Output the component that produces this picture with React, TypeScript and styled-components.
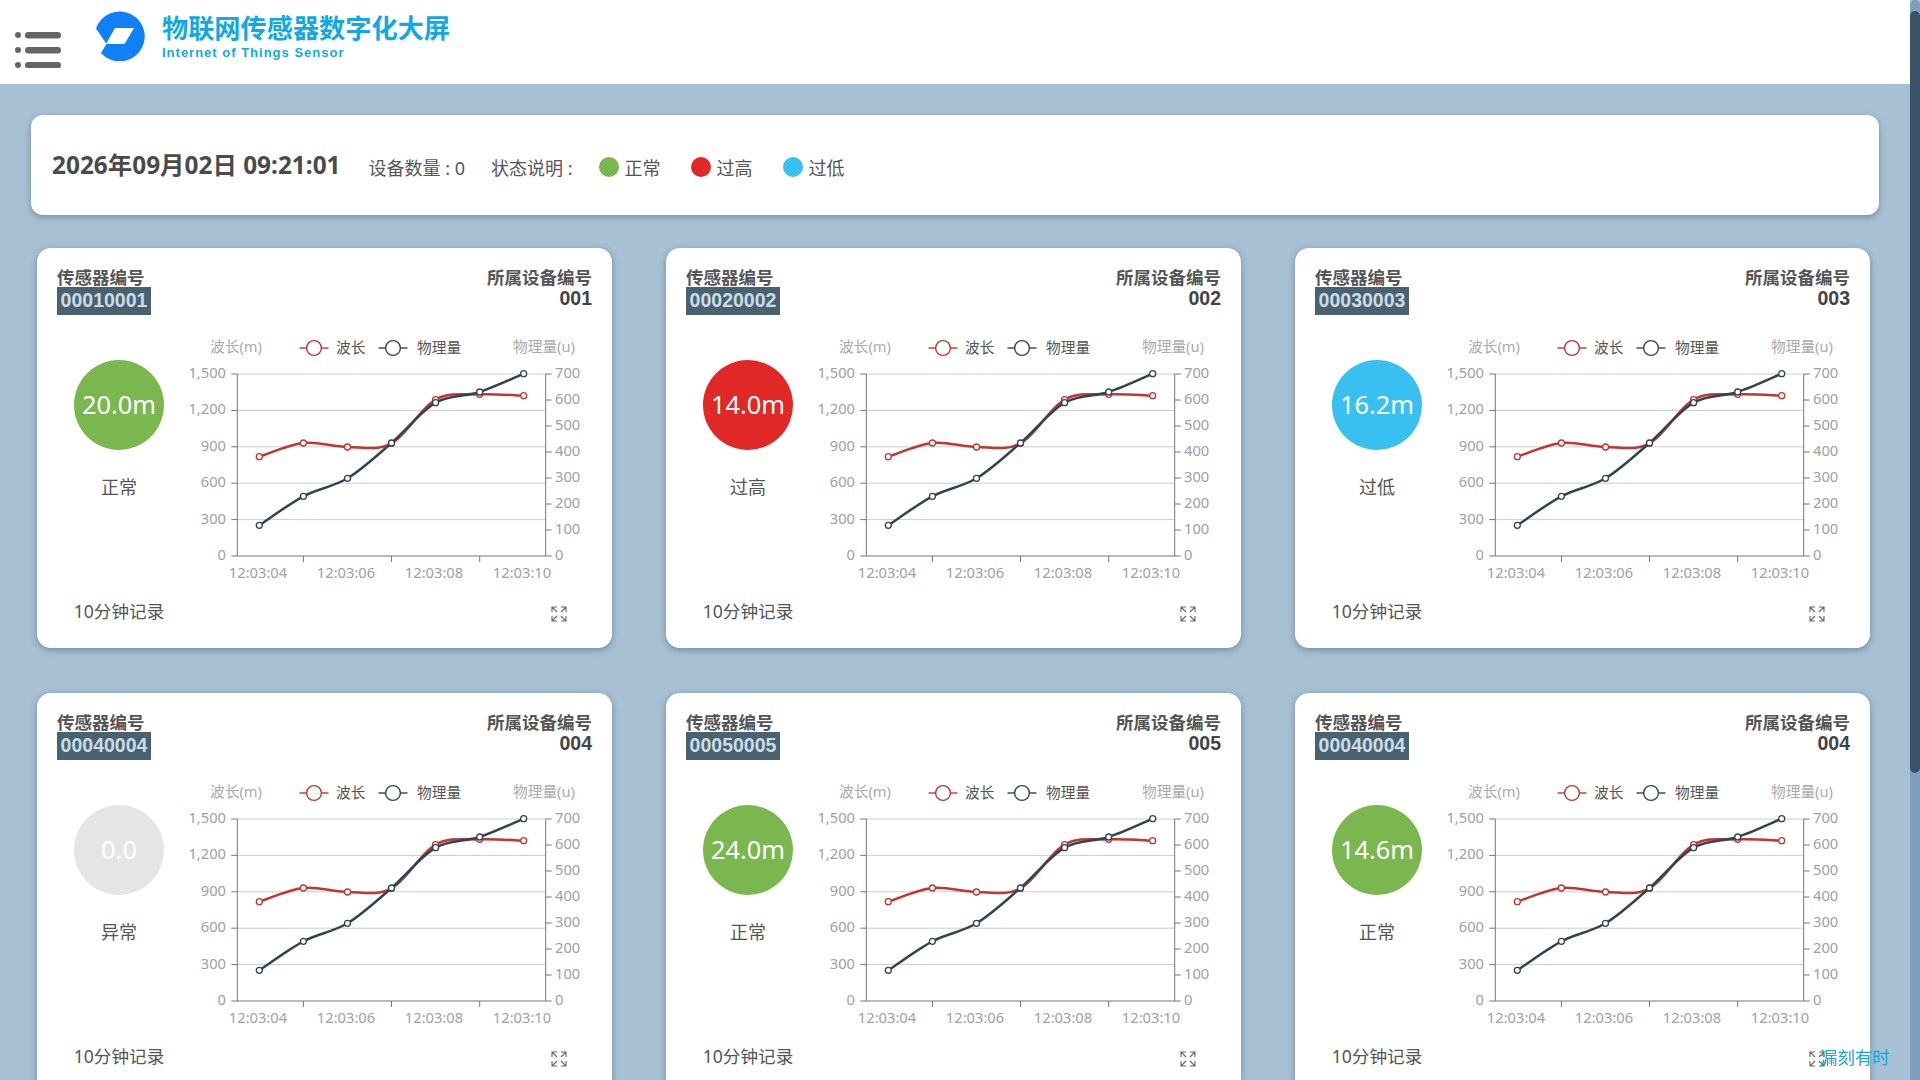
import React from 'react';
import styled, { createGlobalStyle } from 'styled-components';

const GlobalStyle = createGlobalStyle`
html, body {
  margin: 0;
  padding: 0;
  height: 100%;
  overflow: hidden;
}
body {
  font-family: 'Noto Sans', 'Noto Sans CJK SC', sans-serif;
  color: #555;
  background: #a7c0d3;
}
`;

const Shell = styled.div`
display: flex;
height: 100vh;
overflow: hidden;
`;

const Page = styled.div`
flex: 1;
min-width: 0;
background: #a7c0d3;
`;

const Rail = styled.div`
width: 10px;
flex: none;
background: #7d9fbb;
padding-top: 11px;
box-sizing: border-box;
border-radius: 5px 5px 0 0;
`;

const RailThumb = styled.div`
height: 762px;
background: #3a5368;
border-radius: 5px;
`;

const TopBar = styled.header`
height: 84px;
background: #fff;
display: flex;
align-items: flex-start;
padding-left: 15px;
`;

const MenuIcon = styled.svg`
width: 46px;
height: 36px;
margin-top: 32px;
flex: none;
`;

const Logo = styled.svg`
width: 50px;
height: 50px;
margin: 11px 0 0 35px;
flex: none;
`;

const Brand = styled.div`
margin: 12px 0 0 16px;
`;

const BrandTitle = styled.div`
font-size: 26.2px;
line-height: 32px;
font-weight: 700;
color: #12a8e8;
`;

const BrandSub = styled.div`
font-family: 'Liberation Sans', sans-serif;
font-size: 13px;
line-height: 17px;
font-weight: 700;
letter-spacing: 1px;
color: #12a8e8;
`;

const Main = styled.main`
padding: 31px 31px 0 31px;
`;

const StatusBar = styled.section`
height: 100px;
background: #fff;
border-radius: 12px;
box-shadow: 0 2px 6px rgba(40, 60, 80, 0.4);
display: flex;
align-items: center;
padding: 0 0 0 21px;
`;

const DateText = styled.div`
font-size: 24.4px;
font-weight: 700;
color: #4a4a4a;
margin-right: 28px;
position: relative;
top: -2px;
`;

const StatusText = styled.span`
font-size: 18px;
color: #555;
margin-right: 26px;
position: relative;
top: 2px;
`;

const LegendItem = styled.span`
display: flex;
align-items: center;
gap: 6px;
font-size: 18px;
color: #555;
margin-right: 30px;
position: relative;
top: 2px;
`;

const Dot = styled.i<{ $color: string }>`
display: block;
width: 20px;
height: 20px;
border-radius: 50%;
background: ${(p) => p.$color};
`;

const CardGrid = styled.div`
display: grid;
grid-template-columns: repeat(3, 575px);
column-gap: 54px;
row-gap: 45px;
margin: 33px 0 0 6px;
`;

const Card = styled.article`
height: 400px;
box-sizing: border-box;
background: #fff;
border-radius: 14px;
box-shadow: 0 2px 7px rgba(40, 60, 80, 0.4);
padding: 19px 20px 0 20px;
display: flex;
flex-direction: column;
`;

const CardHead = styled.div`
display: flex;
justify-content: space-between;
align-items: flex-start;
height: 48px;
`;

const HeadLabel = styled.div`
font-size: 17.5px;
line-height: 20px;
font-weight: 700;
color: #555;
`;

const SensorCode = styled.div`
width: 94px;
height: 28px;
background: #4a6270;
color: #c9dde7;
font-family: 'Liberation Sans', sans-serif;
font-size: 19.5px;
line-height: 26px;
font-weight: 700;
text-align: center;
`;

const DeviceBlock = styled.div`
text-align: right;
`;

const DeviceCode = styled.div`
font-family: 'Liberation Sans', sans-serif;
font-size: 19.5px;
line-height: 22px;
font-weight: 700;
color: #444;
`;

const CardBody = styled.div`
display: flex;
height: 275px;
`;

const GaugeCol = styled.div`
width: 124px;
flex: none;
display: flex;
flex-direction: column;
align-items: center;
padding-top: 45px;
`;

const Gauge = styled.div<{ $color: string }>`
width: 90px;
height: 90px;
border-radius: 50%;
background: ${(p) => p.$color};
color: #fff;
font-size: 25.4px;
display: flex;
align-items: center;
justify-content: center;
padding-bottom: 2px;
box-sizing: border-box;
`;

const GaugeState = styled.div`
margin-top: 24px;
font-size: 18px;
line-height: 26px;
color: #555;
`;

const Chart = styled.svg`
width: 411px;
height: 255px;
margin-top: 20px;
flex: none;
font-family: 'Noto Sans', 'Noto Sans CJK SC', sans-serif;
font-size: 14.7px;
`;

const CardFoot = styled.div`
display: flex;
justify-content: space-between;
align-items: center;
height: 22px;
margin-top: 10px;
padding-right: 25px;
`;

const FootLabel = styled.div`
width: 124px;
text-align: center;
font-size: 17.6px;
color: #555;
position: relative;
top: -1px;
`;

const ExpandIcon = styled.svg`
width: 16px;
height: 16px;
margin-top: 6px;
`;

const Watermark = styled.div`
position: fixed;
left: 1820px;
top: 1045px;
font-size: 17.5px;
line-height: 24px;
color: #1aa7e0;
`;

type Sensor = {
  code: string;
  device: string;
  value: string;
  state: string;
  color: string;
};

const GREEN = '#7ab74f';
const RED = '#e02826';
const BLUE = '#38c0f0';
const GREY = '#e5e5e5';

const sensors: Sensor[] = [
  { code: '00010001', device: '001', value: '20.0m', state: '正常', color: GREEN },
  { code: '00020002', device: '002', value: '14.0m', state: '过高', color: RED },
  { code: '00030003', device: '003', value: '16.2m', state: '过低', color: BLUE },
  { code: '00040004', device: '004', value: '0.0', state: '异常', color: GREY },
  { code: '00050005', device: '005', value: '24.0m', state: '正常', color: GREEN },
  { code: '00040004', device: '004', value: '14.6m', state: '正常', color: GREEN },
];

const plot = { left: 56.3, right: 364.7, top: 39, bottom: 221 };
const xs = [78.3, 122.4, 166.5, 210.5, 254.6, 298.7, 342.7];
const waveY = [121.7, 108, 112, 108.3, 64.7, 59.3, 60.7];
const physY = [190.3, 161.3, 143.3, 108, 67.7, 57, 38.7];
const leftLabels = ['1,500', '1,200', '900', '600', '300', '0'];
const rightLabels = ['700', '600', '500', '400', '300', '200', '100', '0'];
const timeLabels: [number, string][] = [
  [77, '12:03:04'],
  [165, '12:03:06'],
  [253, '12:03:08'],
  [341, '12:03:10'],
];

// catmull-rom, close enough to the echarts smooth line
function smoothPath(ys: number[]) {
  let d = `M${xs[0]} ${ys[0]}`;
  for (let i = 0; i < xs.length - 1; i++) {
    const x0 = xs[Math.max(i - 1, 0)];
    const y0 = ys[Math.max(i - 1, 0)];
    const x3 = xs[Math.min(i + 2, xs.length - 1)];
    const y3 = ys[Math.min(i + 2, xs.length - 1)];
    const c1x = xs[i] + (xs[i + 1] - x0) / 6;
    const c1y = ys[i] + (ys[i + 1] - y0) / 6;
    const c2x = xs[i + 1] - (x3 - xs[i]) / 6;
    const c2y = ys[i + 1] - (y3 - ys[i]) / 6;
    d += ` C${c1x} ${c1y} ${c2x} ${c2y} ${xs[i + 1]} ${ys[i + 1]}`;
  }
  return d;
}

function Series({ ys, color }: { ys: number[]; color: string }) {
  return (
    <g>
      <path d={smoothPath(ys)} fill="none" stroke={color} strokeWidth="2.5" />
      {xs.map((x, i) => (
        <circle key={x} cx={x} cy={ys[i]} r="3" fill="#fff" stroke={color} strokeWidth="1.3" />
      ))}
    </g>
  );
}

function LegendMark({ x, color }: { x: number; color: string }) {
  return (
    <g stroke={color} strokeWidth="1.4">
      <line x1={x - 14.5} x2={x + 14.5} y1="13" y2="13" />
      <circle cx={x} cy="13" r="7.4" fill="#fff" />
    </g>
  );
}

function SensorChart() {
  const leftStep = (plot.bottom - plot.top) / 5;
  const rightStep = (plot.bottom - plot.top) / 7;
  return (
    <Chart viewBox="0 0 411 255">
      <g fill="#aaa" textAnchor="middle">
        <text x="55" y="17">波长(m)</text>
        <text x="363" y="17">物理量(u)</text>
      </g>
      <LegendMark x={133} color="#c23531" />
      <LegendMark x={212} color="#2f4554" />
      <g fill="#555">
        <text x="155" y="18">波长</text>
        <text x="236" y="18">物理量</text>
      </g>

      {leftLabels.map((label, i) => {
        const y = plot.top + i * leftStep;
        return (
          <g key={label}>
            {i < 5 && <line x1={plot.left} x2={plot.right} y1={y} y2={y} stroke="#ccc" />}
            <line x1={plot.left - 6} x2={plot.left} y1={y} y2={y} stroke="#777" />
            <text x="45" y={y + 4} fill="#a0a0a0" textAnchor="end">{label}</text>
          </g>
        );
      })}
      {rightLabels.map((label, i) => {
        const y = plot.top + i * rightStep;
        return (
          <g key={label}>
            <line x1={plot.right} x2={plot.right + 6} y1={y} y2={y} stroke="#777" />
            <text x="374" y={y + 4} fill="#a0a0a0">{label}</text>
          </g>
        );
      })}

      <g stroke="#777">
        <line x1={plot.left} x2={plot.left} y1={plot.top} y2={plot.bottom} />
        <line x1={plot.right} x2={plot.right} y1={plot.top} y2={plot.bottom} />
        <line x1={plot.left} x2={plot.right} y1={plot.bottom} y2={plot.bottom} />
        {[122.4, 210.5, 298.7].map((x) => (
          <line key={x} x1={x} x2={x} y1={plot.bottom} y2={plot.bottom + 6} />
        ))}
      </g>
      {timeLabels.map(([x, label]) => (
        <text key={label} x={x} y="243" fill="#a0a0a0" textAnchor="middle">{label}</text>
      ))}

      <Series ys={waveY} color="#c23531" />
      <Series ys={physY} color="#2f4554" />
    </Chart>
  );
}

function SensorCard({ sensor }: { sensor: Sensor }) {
  return (
    <Card>
      <CardHead>
        <div>
          <HeadLabel>传感器编号</HeadLabel>
          <SensorCode>{sensor.code}</SensorCode>
        </div>
        <DeviceBlock>
          <HeadLabel>所属设备编号</HeadLabel>
          <DeviceCode>{sensor.device}</DeviceCode>
        </DeviceBlock>
      </CardHead>
      <CardBody>
        <GaugeCol>
          <Gauge $color={sensor.color}>{sensor.value}</Gauge>
          <GaugeState>{sensor.state}</GaugeState>
        </GaugeCol>
        <SensorChart />
      </CardBody>
      <CardFoot>
        <FootLabel>10分钟记录</FootLabel>
        <ExpandIcon viewBox="0 0 16 16" fill="none" stroke="#666" strokeWidth="1.1">
          <path d="M1 6V1h5M1 1l5 5M10 1h5v5M15 1l-5 5M1 10v5h5M1 15l5-5M10 15h5v-5M15 15l-5-5" />
        </ExpandIcon>
      </CardFoot>
    </Card>
  );
}

function App() {
  return (
    <Shell>
      <GlobalStyle />
      <Page>
        <TopBar>
          <MenuIcon viewBox="0 0 46 36" fill="#666">
            <circle cx="3" cy="3" r="3" />
            <circle cx="3" cy="18" r="3" />
            <circle cx="3" cy="33" r="3" />
            <rect x="10" y="0" width="36" height="6.4" rx="3.2" />
            <rect x="10" y="15" width="36" height="6.4" rx="3.2" />
            <rect x="10" y="30" width="36" height="6.4" rx="3.2" />
          </MenuIcon>
          <Logo viewBox="0 0 50 50">
            <path
              fill="#0f80f5"
              d="M0 17.5A25 25 0 1 1 5 42L10.5 33 Z"
            />
            <path fill="#fff" d="M19 17h19l-9.5 16H10z" />
          </Logo>
          <Brand>
            <BrandTitle>物联网传感器数字化大屏</BrandTitle>
            <BrandSub>Internet of Things Sensor</BrandSub>
          </Brand>
        </TopBar>
        <Main>
          <StatusBar>
            <DateText>2026年09月02日 09:21:01</DateText>
            <StatusText>设备数量 : 0</StatusText>
            <StatusText>状态说明 :</StatusText>
            <LegendItem><Dot $color={GREEN} />正常</LegendItem>
            <LegendItem><Dot $color={RED} />过高</LegendItem>
            <LegendItem><Dot $color={BLUE} />过低</LegendItem>
          </StatusBar>
          <CardGrid>
            {sensors.map((sensor, i) => (
              <SensorCard key={i} sensor={sensor} />
            ))}
          </CardGrid>
        </Main>
      </Page>
      <Rail>
        <RailThumb />
      </Rail>
      <Watermark>漏刻有时</Watermark>
    </Shell>
  );
}

export default App;
